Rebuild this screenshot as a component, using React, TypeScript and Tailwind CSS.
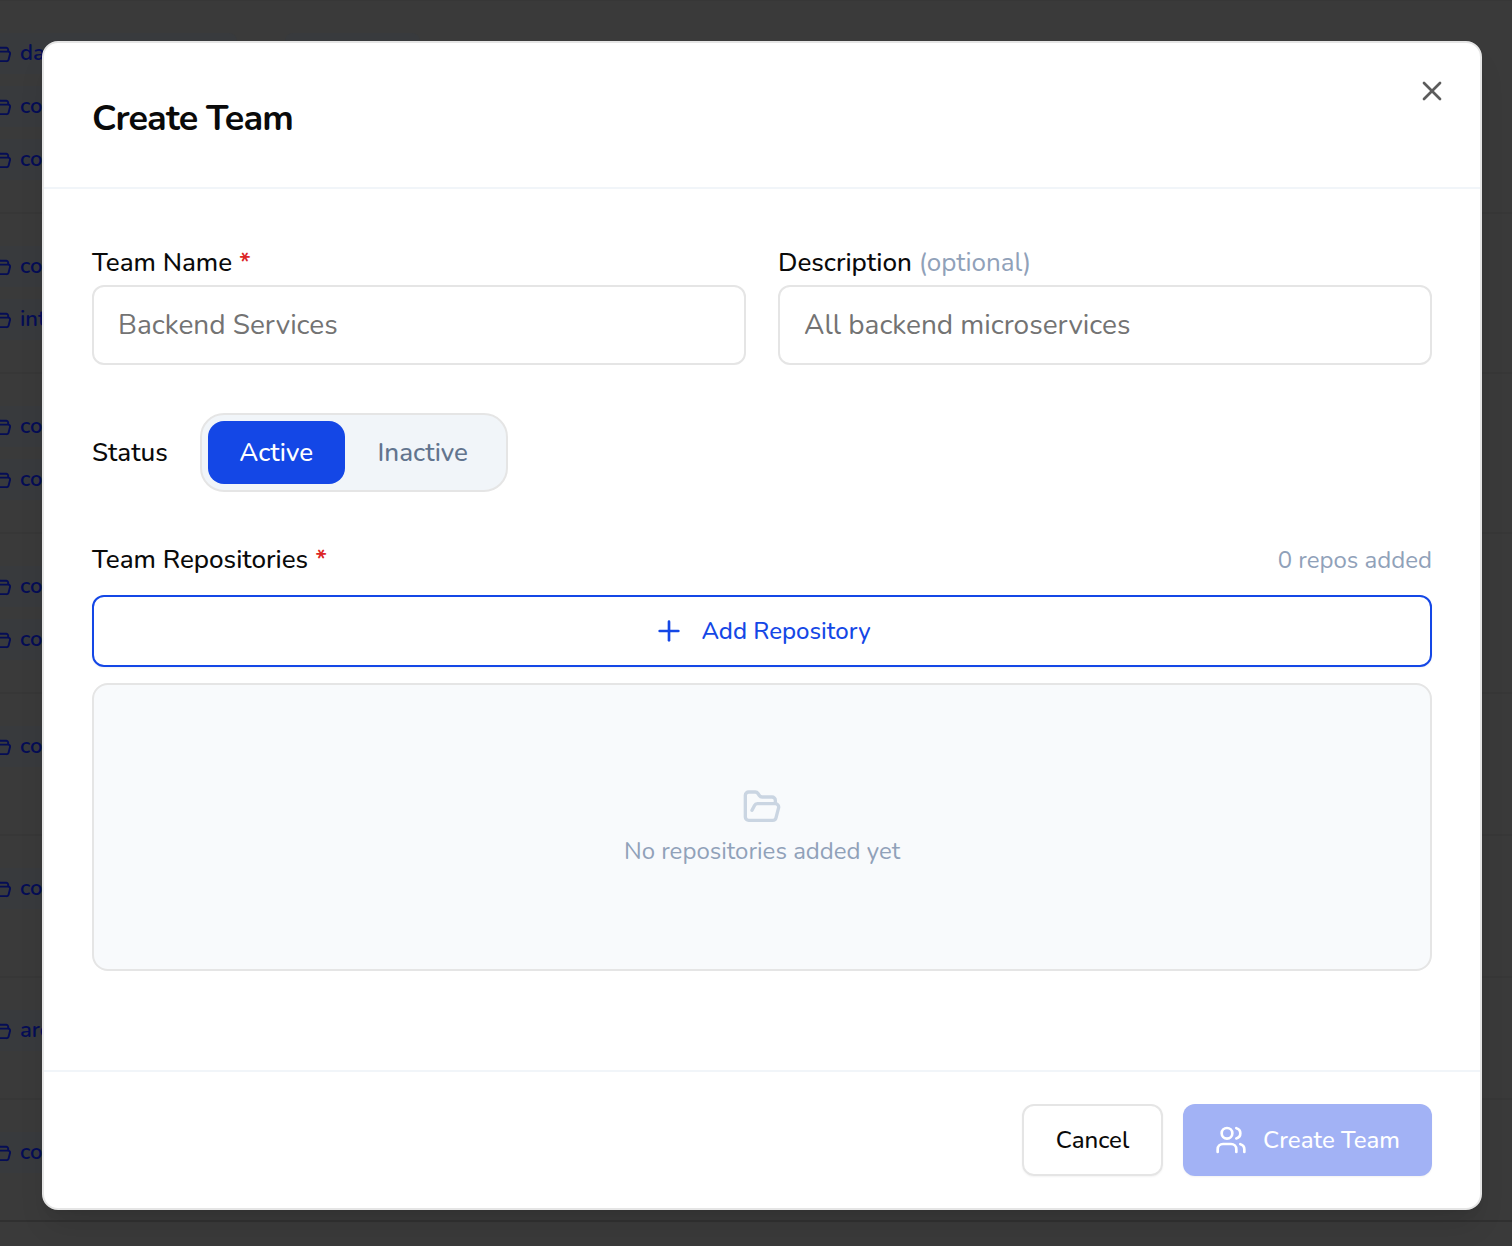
import { FolderOpen, Plus, Users, X } from "lucide-react";

const groups = [
  { height: "h-[213px]", chips: ["data", "core", "core"] },
  { height: "h-[160px]", chips: ["core", "int"] },
  { height: "h-[160px]", chips: ["core", "core"] },
  { height: "h-[160px]", chips: ["core", "core"] },
  { height: "h-[142px]", chips: ["core"] },
  { height: "h-[142px]", chips: ["core"] },
  { height: "h-[122px]", chips: ["arc"] },
  { height: "h-[122px]", chips: ["core"] },
];

function Chip({ name, wide }: { name: string; wide: boolean }) {
  return (
    <div className="flex h-[53px] shrink-0 items-start">
      <div
        className={`-ml-5 flex h-[41px] items-center gap-2 overflow-hidden rounded-lg bg-[#383a3d] pl-[9px] text-[22px] font-semibold text-[#050d55] ${wide ? "w-[257px]" : "w-[200px]"}`}
      >
        <FolderOpen size={23} strokeWidth={2} className="shrink-0" />
        {name}
      </div>
      {wide && <div className="ml-12 h-[41px] w-[135px] rounded-lg bg-[#383a3d]" />}
    </div>
  );
}

function Backdrop() {
  return (
    <div className="absolute inset-0 overflow-hidden bg-[#3a3a3a]" aria-hidden="true">
      <div className="-mt-px flex flex-col">
        {groups.map((g, i) => (
          <div key={i} className={`flex shrink-0 flex-col border-t-2 border-[#373737] pt-8 ${g.height}`}>
            {g.chips.map((c, j) => (
              <Chip key={j} name={c} wide={i === 0 && j === 0} />
            ))}
          </div>
        ))}
        <div className="h-[2px] shrink-0 bg-[#303030]" />
      </div>
    </div>
  );
}

export default function App() {
  return (
    <div className="relative flex h-[1246px] w-[1512px] items-start overflow-hidden pt-[41px] pl-[42px] font-['Nunito','Lato',sans-serif] text-[#0a0a0a]">
      <Backdrop />
      <section
        role="dialog"
        aria-label="Create Team"
        className="relative flex h-[1169px] w-[1440px] flex-col rounded-2xl border-2 border-[#e5e5e5] bg-white shadow-[0_20px_30px_-6px_rgba(0,0,0,0.1),0_8px_12px_-8px_rgba(0,0,0,0.1)]"
      >
        <header className="flex h-[146px] shrink-0 items-start justify-between border-b-2 border-slate-100 pr-8 pl-12">
          <h1 className="pt-[58px] text-[36px] leading-[36px] font-bold tracking-[-0.9px]">Create Team</h1>
          <button aria-label="Close" className="mt-8 text-[#5c5c5c]">
            <X size={32} strokeWidth={2} />
          </button>
        </header>

        <main className="flex flex-1 flex-col px-12 pt-12">
          <div className="grid grid-cols-2 gap-8">
            <label className="flex flex-col text-[26px] font-medium">
              <span className="flex h-[48px] items-center pt-0.5">
                Team Name<span className="ml-[7px] font-semibold text-[#dc2626]">*</span>
              </span>
              <input
                placeholder="Backend Services"
                className="h-20 rounded-xl border-2 border-[#e5e5e5] px-6 text-[28px] font-normal placeholder:text-[#737373]"
              />
            </label>
            <label className="flex flex-col text-[26px] font-medium">
              <span className="flex h-[48px] items-center pt-0.5">
                Description<span className="ml-[7px] font-normal text-slate-400">(optional)</span>
              </span>
              <input
                placeholder="All backend microservices"
                className="h-20 rounded-xl border-2 border-[#e5e5e5] px-6 text-[28px] font-normal placeholder:text-[#737373]"
              />
            </label>
          </div>

          <div className="mt-12 flex h-[79px] items-center gap-8 text-[26px] font-medium">
            <span>Status</span>
            <div className="flex h-[79px] w-[308px] rounded-3xl border-2 border-[#e5e5e5] bg-slate-100 p-1.5">
              <button className="h-[63px] w-[137px] rounded-2xl bg-[#1447e6] text-white">Active</button>
              <button className="h-[63px] flex-1 pl-px text-slate-500">Inactive</button>
            </div>
          </div>

          <div className="mt-[49px] flex h-[38px] items-center justify-between">
            <span className="pb-0.5 text-[26px] font-medium">
              Team Repositories<span className="ml-[7px] font-semibold text-[#dc2626]">*</span>
            </span>
            <span className="text-[24px] text-slate-400">0 repos added</span>
          </div>

          <button className="mt-4 flex h-[72px] shrink-0 items-center justify-center gap-4 rounded-xl border-2 border-[#1447e6] text-[24px] font-medium text-[#1447e6] shadow-xs">
            <Plus size={32} strokeWidth={2} />
            Add Repository
          </button>

          <div className="mt-4 flex h-[288px] shrink-0 flex-col items-center justify-center rounded-2xl border-2 border-[#e5e5e5] bg-slate-50">
            <FolderOpen size={40} className="text-slate-300" />
            <p className="mt-2 text-[24px] leading-8 text-slate-400">No repositories added yet</p>
          </div>
        </main>

        <footer className="flex h-[138px] shrink-0 items-start justify-end gap-5 border-t-2 border-slate-100 px-12 pt-8 text-[24px] font-medium">
          <button className="h-[72px] w-[141px] rounded-xl border-2 border-[#e5e5e5] shadow-xs">Cancel</button>
          <button className="flex h-[72px] w-[249px] items-center justify-center gap-4 rounded-xl bg-[#a2b2f5] text-white shadow-xs">
            <Users size={32} strokeWidth={2} />
            Create Team
          </button>
        </footer>
      </section>
    </div>
  );
}
